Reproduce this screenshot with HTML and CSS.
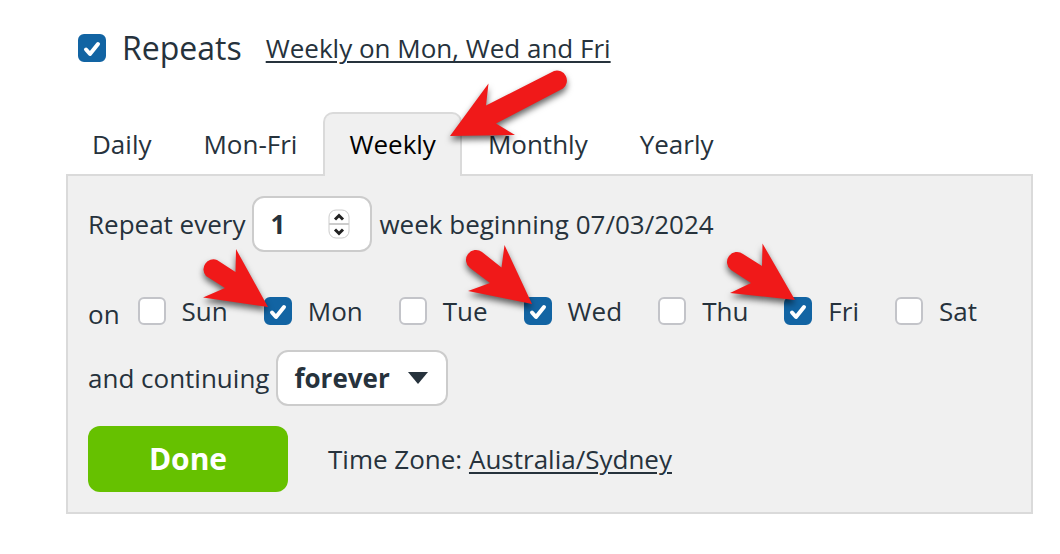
FILE: index.html
```html
<!DOCTYPE html>
<html lang="en">

<head>
  <meta charset="UTF-8">
  <meta name="viewport" content="width=device-width, initial-scale=1.0">
  <title>Repeats</title>
  <link rel="stylesheet" href="styles.css">
</head>

<body>
  <form class="repeat">
    <header class="repeat-head">
      <label class="check title">
        <span class="tick">
          <input type="checkbox" checked>
          <svg viewBox="0 0 28 28"><path d="M8 15.500l4 4.500 8-10" /></svg>
        </span>
        Repeats
      </label>
      <a href="#" class="summary">Weekly on Mon, Wed and Fri</a>
    </header>

    <nav class="tabs">
      <button type="button" class="tab">Daily</button>
      <button type="button" class="tab">Mon-Fri</button>
      <button type="button" class="tab active">Weekly</button>
      <button type="button" class="tab">Monthly</button>
      <button type="button" class="tab">Yearly</button>
      <svg class="arrow arrow-tab" viewBox="440 60 140 90"><path d="M450 136L488.500 83.500L486 105.500L554 71A10 10 0 0 1 563 88.500L496 123.500L515 135Z" /></svg>
    </nav>

    <section class="panel">
      <div class="row">
        <label for="every">Repeat every</label>
        <span class="number">
          <input type="number" id="every" value="1" min="1">
          <svg class="spinner" viewBox="0 0 22 30">
            <rect x="1" y="1" width="20" height="28" rx="7" />
            <path class="line" d="M1 15h20" />
            <path class="chevron" d="M7 10.500l4-4 4 4M7 20.500l4 4 4-4" />
          </svg>
        </span>
        <span>week beginning 07/03/2024</span>
      </div>

      <div class="days">
        <span class="on">on</span>
        <label class="check">
          <span class="tick"><input type="checkbox"></span>
          Sun
        </label>
        <label class="check">
          <span class="tick">
            <input type="checkbox" checked>
            <svg viewBox="0 0 28 28"><path d="M8 15.500l4 4.500 8-10" /></svg>
          </span>
          Mon
          <svg class="arrow arrow-day" viewBox="194 237 90 80"><path d="M268 307L236 249L235.500 272L217 260A10 10 0 0 0 206 276L225 288L203 297.500Z" /></svg>
        </label>
        <label class="check">
          <span class="tick"><input type="checkbox"></span>
          Tue
        </label>
        <label class="check">
          <span class="tick">
            <input type="checkbox" checked>
            <svg viewBox="0 0 28 28"><path d="M8 15.500l4 4.500 8-10" /></svg>
          </span>
          Wed
          <svg class="arrow arrow-day" viewBox="454 237 90 80"><path d="M532 304L504.500 245L501.500 267.500L482 252A10 10 0 0 0 470 268L490 283L468 291Z" /></svg>
        </label>
        <label class="check">
          <span class="tick"><input type="checkbox"></span>
          Thu
        </label>
        <label class="check">
          <span class="tick">
            <input type="checkbox" checked>
            <svg viewBox="0 0 28 28"><path d="M8 15.500l4 4.500 8-10" /></svg>
          </span>
          Fri
          <svg class="arrow arrow-day" viewBox="715 237 90 80"><path d="M796 300L763.500 243.500L763 266L744 254A10 10 0 0 0 732 270L752 283L731 293Z" /></svg>
        </label>
        <label class="check">
          <span class="tick"><input type="checkbox"></span>
          Sat
        </label>
      </div>

      <div class="row">
        <label for="until">and continuing</label>
        <span class="select">
          <select id="until">
            <option>forever</option>
            <option>until</option>
          </select>
          <svg class="caret" viewBox="0 0 20 12"><path d="M0 0h20L10 12z" /></svg>
        </span>
      </div>

      <footer class="actions">
        <button type="submit" class="done">Done</button>
        <span>Time Zone: <a href="#">Australia/Sydney</a></span>
      </footer>
    </section>
  </form>
</body>

</html>
```
FILE: styles.css
```css
* {
  box-sizing: border-box;
}

body {
  margin: 0;
  padding: 24px 27px 40px 66px;
  background: #fff;
  font: 26px/36px "Open Sans", "Noto Sans", sans-serif;
  color: #26323c;
}

a {
  color: inherit;
  text-decoration-thickness: 2px;
  text-underline-offset: 3px;
}

input,
select,
button {
  margin: 0;
  font: inherit;
  color: inherit;
}

.repeat-head {
  display: flex;
  align-items: center;
  gap: 24px;
  height: 48px;
  padding-left: 12px;
}

.title {
  font-size: 32px;
}

/* checkboxes */
.check {
  position: relative;
  display: flex;
  align-items: center;
  gap: 16px;
}

.tick {
  display: grid;
  width: 28px;
  height: 28px;
}

.tick input,
.tick svg {
  grid-area: 1 / 1;
  width: 28px;
  height: 28px;
}

.tick input {
  appearance: none;
  border: 2px solid #c3c4c9;
  border-radius: 6px;
  background: #fff;
}

.tick input:checked {
  border-color: #1264a3;
  background: #1264a3;
}

.tick svg {
  z-index: 1;
  pointer-events: none;
  fill: none;
  stroke: #fff;
  stroke-width: 4;
  stroke-linecap: round;
  stroke-linejoin: round;
}

/* tabs */
.tabs {
  position: relative;
  z-index: 1;
  display: flex;
  margin-top: 40px;
  margin-bottom: -2px;
}

.tab {
  height: 64px;
  padding: 0 24px 2px;
  border: 2px solid transparent;
  border-bottom: 0;
  border-radius: 10px 10px 0 0;
  background: none;
}

.tab.active {
  border-color: #dadada;
  background: #f0f0f0;
  color: #000;
}

.panel {
  padding: 20px;
  border: 2px solid #dadada;
  background: #f0f0f0;
}

.row {
  display: flex;
  align-items: center;
  gap: 7px;
}

.number,
.select {
  position: relative;
}

.number input,
.select select {
  display: block;
  height: 56px;
  padding: 0 16px;
  border: 2px solid #ccc;
  border-radius: 12px;
  background: #fff;
  font-weight: 700;
}

.number input {
  width: 120px;
  appearance: textfield;
}

.number input::-webkit-inner-spin-button {
  display: none;
}

.spinner {
  position: absolute;
  top: 13px;
  right: 22px;
  width: 22px;
  height: 30px;
  pointer-events: none;
  fill: #fff;
  stroke: #ccc;
}

.spinner .line {
  stroke-width: 2;
}

.spinner .chevron {
  fill: none;
  stroke: #222;
  stroke-width: 3;
}

.select select {
  width: 172px;
  appearance: none;
}

.caret {
  position: absolute;
  top: 22px;
  right: 20px;
  width: 20px;
  height: 12px;
  pointer-events: none;
  fill: #26323c;
}

.days {
  display: flex;
  align-items: center;
  gap: 36px;
  height: 36px;
  margin: 41px 0 21px;
}

.on {
  margin-right: -18px;
  padding-top: 6px;
}

.actions {
  display: flex;
  align-items: center;
  gap: 40px;
  margin-top: 20px;
}

.done {
  width: 200px;
  height: 66px;
  border: 0;
  border-radius: 12px;
  background: #66c100;
  color: #fff;
  font-size: 30px;
  font-weight: 700;
}

/* pointers */
.arrow {
  position: absolute;
  z-index: 2;
  overflow: visible;
  pointer-events: none;
  fill: #f01919;
  filter: drop-shadow(0 4px 3px rgba(0, 0, 0, 0.6));
}

.arrow-tab {
  top: -52px;
  left: 374px;
  width: 140px;
  height: 90px;
}

.arrow-day {
  top: -56px;
  left: -70px;
  width: 90px;
  height: 80px;
}
```
